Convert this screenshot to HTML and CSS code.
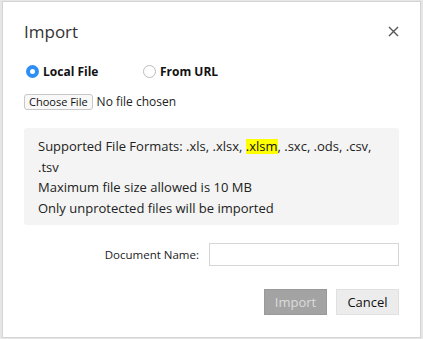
FILE: index.html
```html
<!DOCTYPE html>
<html lang="en">
<head>
    <meta charset="UTF-8">
    <title>Import</title>
    <link rel="stylesheet" href="styles.css">
</head>
<body>
    <div class="dialog">
        <div class="dialog-head">
            <span class="dialog-title">Import</span>
            <span class="close">
                <svg width="11" height="11" viewBox="0 0 11 11"><path d="M1 1L10 10M10 1L1 10" stroke="#555" stroke-width="1.4" fill="none"/></svg>
            </span>
        </div>

        <div class="source-row">
            <label class="radio"><span class="dot checked"></span>Local File</label>
            <label class="radio"><span class="dot"></span>From URL</label>
        </div>

        <div class="file-row">
            <span class="file-btn">Choose File</span>
            <span class="file-name">No file chosen</span>
        </div>

        <div class="info-box">
            <p>Supported File Formats: .xls, .xlsx, <mark>.xlsm</mark>, .sxc, .ods, .csv, .tsv</p>
            <p>Maximum file size allowed is 10 MB</p>
            <p>Only unprotected files will be imported</p>
        </div>

        <div class="name-row">
            <label>Document Name:</label>
            <span class="name-input"></span>
        </div>

        <div class="actions">
            <span class="btn btn-disabled">Import</span>
            <span class="btn btn-cancel">Cancel</span>
        </div>
    </div>
</body>
</html>
```

FILE: styles.css
```css
body {
    margin: 0;
    background: #e6e6e6;
    font-family: "Open Sans", "Liberation Sans", sans-serif;
    color: #222;
}

.dialog {
    box-sizing: border-box;
    width: 419px;
    height: 337px;
    margin: 1px 0 0 2px;
    background: white;
    border: 1px solid #d4d4d4;
    padding: 0 21px;
}

.dialog-head {
    display: flex;
    justify-content: space-between;
    align-items: center;
    height: 58px;
}

.dialog-title {
    font-size: 17px;
    color: #333;
}

.close {
    display: flex;
}

.source-row {
    display: flex;
    align-items: center;
    height: 18px;
    margin-top: 2px;
}

.radio {
    display: flex;
    align-items: center;
    font-size: 12px;
    font-weight: bold;
    color: #111;
    width: 117px;
}

.dot {
    box-sizing: border-box;
    width: 13px;
    height: 13px;
    margin: 0 4px 0 2px;
    border-radius: 50%;
    border: 1px solid #bbb;
    background: white;
}

.dot.checked {
    border: 4px solid #2d8ff5;
}

.file-row {
    display: flex;
    align-items: center;
    height: 17px;
    margin-top: 13px;
}

.file-btn {
    box-sizing: border-box;
    height: 16px;
    display: flex;
    align-items: center;
    font-size: 11px;
    padding: 0 4px;
    border: 1px solid #c8c8c8;
    border-radius: 3px;
    background: #f8f8f8;
    color: #111;
}

.file-name {
    font-size: 12px;
    margin-left: 4px;
}

.info-box {
    margin-top: 18px;
    background: #f4f4f4;
    border-radius: 3px;
    padding: 8px 14px 7px;
    font-size: 13px;
    line-height: 20.5px;
}

.info-box p {
    margin: 0;
}

mark {
    display: inline-block;
    background: #ffff00;
    color: #111;
    line-height: 15px;
}

.name-row {
    display: flex;
    align-items: center;
    justify-content: flex-end;
    margin-top: 18px;
}

.name-row label {
    font-size: 11.5px;
    margin-right: 10px;
}

.name-input {
    display: block;
    box-sizing: border-box;
    width: 190px;
    height: 23px;
    border: 1px solid #d6d6d6;
}

.actions {
    display: flex;
    justify-content: flex-end;
    gap: 9px;
    margin-top: 23px;
}

.btn {
    box-sizing: border-box;
    width: 63px;
    height: 26px;
    display: flex;
    align-items: center;
    justify-content: center;
    font-size: 13px;
}

.btn-disabled {
    background: #a3a3a3;
    color: #dcdcdc;
    border: 1px solid #999;
}

.btn-cancel {
    background: #ececec;
    color: #111;
    border: 1px solid #e0e0e0;
}
```
